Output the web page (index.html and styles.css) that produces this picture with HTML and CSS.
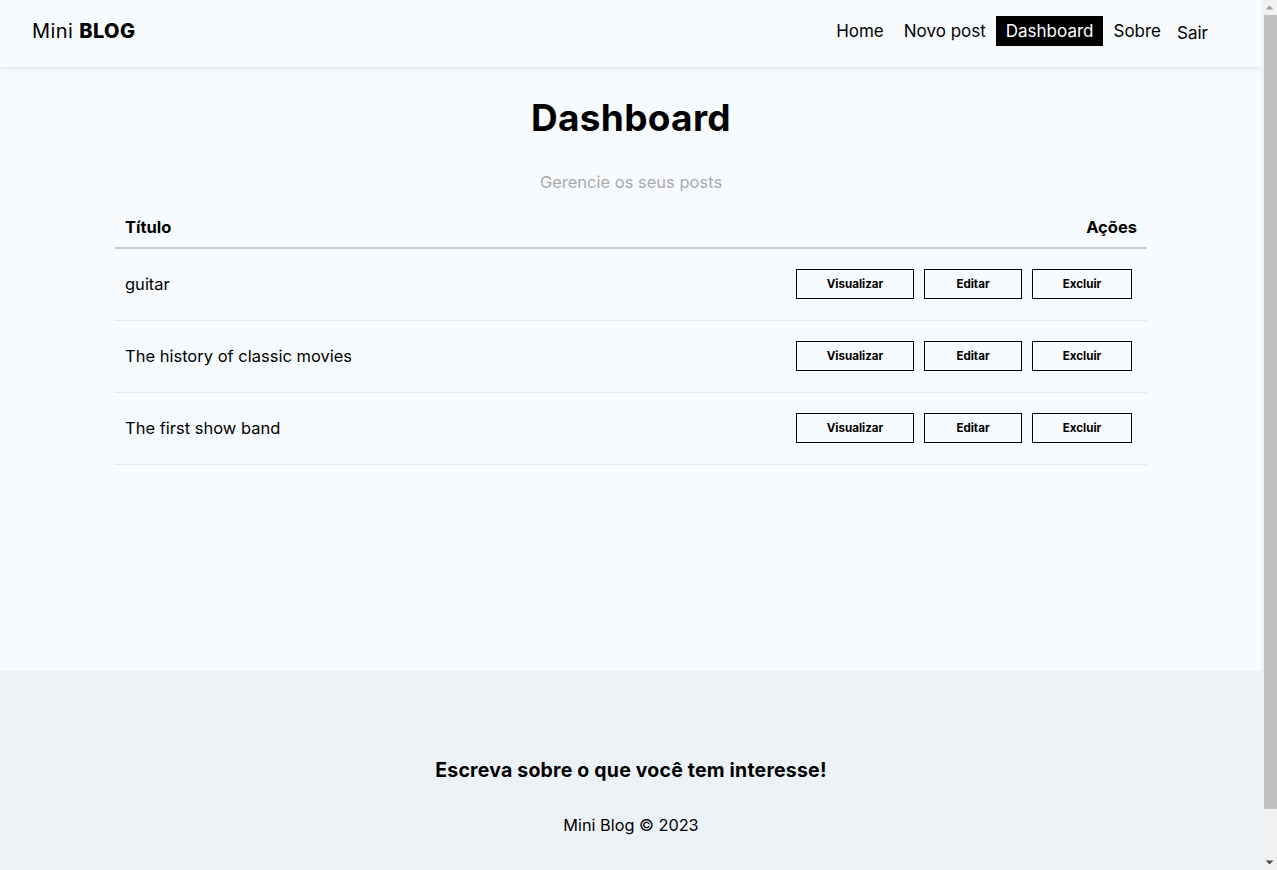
FILE: index.html
```html
<!DOCTYPE html>
<html lang="pt-BR">
<head>
<meta charset="utf-8">
<title>Mini Blog</title>
<link rel="stylesheet" href="styles.css">
</head>
<body>
<nav class="navbar">
  <a class="brand" href="#">Mini <span>BLOG</span></a>
  <ul class="links">
    <li><a href="#">Home</a></li>
    <li><a href="#">Novo post</a></li>
    <li><a href="#" class="active">Dashboard</a></li>
    <li><a href="#">Sobre</a></li>
    <li><button class="logout">Sair</button></li>
  </ul>
</nav>
<main class="container">
  <div class="dashboard">
    <h2 class="title">Dashboard</h2>
    <p class="subtitle">Gerencie os seus posts</p>
    <div class="post-header">
      <span>Título</span>
      <span>Ações</span>
    </div>
    <div class="post-row">
      <p>guitar</p>
      <div class="actions">
        <a class="btn btn-view" href="#">Visualizar</a>
        <a class="btn btn-edit" href="#">Editar</a>
        <button class="btn btn-del">Excluir</button>
      </div>
    </div>
    <div class="post-row">
      <p>The history of classic movies</p>
      <div class="actions">
        <a class="btn btn-view" href="#">Visualizar</a>
        <a class="btn btn-edit" href="#">Editar</a>
        <button class="btn btn-del">Excluir</button>
      </div>
    </div>
    <div class="post-row">
      <p>The first show band</p>
      <div class="actions">
        <a class="btn btn-view" href="#">Visualizar</a>
        <a class="btn btn-edit" href="#">Editar</a>
        <button class="btn btn-del">Excluir</button>
      </div>
    </div>
  </div>
</main>
<footer class="footer">
  <h3>Escreva sobre o que você tem interesse!</h3>
  <p>Mini Blog &copy; 2023</p>
</footer>
<div class="scrollbar" aria-hidden="true">
  <div class="sb-arrow"><svg width="15" height="15" viewBox="0 0 15 15"><path d="M3.5 9.5 L7.5 5.5 L11.5 9.5 Z" fill="#a3a3a3"/></svg></div>
  <div class="sb-thumb"></div>
  <div class="sb-track"></div>
  <div class="sb-arrow"><svg width="15" height="15" viewBox="0 0 15 15"><path d="M3.5 5.5 L11.5 5.5 L7.5 9.5 Z" fill="#505050"/></svg></div>
</div>
</body>
</html>
```

FILE: styles.css
```css
* { box-sizing: border-box; }
html, body { margin: 0; padding: 0; }
html { padding-right: 15px; background: #f1f1f1; }
body {
  font-family: "Inter", "Open Sans", sans-serif;
  background: #f7fbfe;
  color: #000;
}
a { color: inherit; text-decoration: none; }

.navbar {
  height: 67px;
  display: flex;
  align-items: center;
  justify-content: space-between;
  padding: 0 48px 6px 32px;
  box-shadow: 0 2px 5px rgba(0,0,0,0.08);
  position: relative;
}
.brand { font-size: 20px; letter-spacing: 0.4px; color: #000; }
.brand span { font-weight: 800; }
.links {
  list-style: none;
  display: flex;
  align-items: center;
  margin: 0;
  padding: 0;
}
.links a {
  display: block;
  font-size: 17px;
  padding: 5px 10px;
  color: #000;
  line-height: 20px;
}
.links a.active { background: #000; color: #fff; }
.logout {
  font-family: inherit;
  background: none;
  border: none;
  font-size: 17px;
  padding: 7px 6px 3px;
  color: #000;
  line-height: 20px;
}

.container { min-height: 604px; }
.dashboard {
  width: 1032px;
  margin: 0 auto;
  display: flex;
  flex-direction: column;
}
.title {
  margin: 31px 0 0;
  text-align: center;
  font-size: 37px;
  font-weight: 700;
  line-height: 40px;
  letter-spacing: 0.3px;
}
.subtitle {
  margin: 34px 0 0;
  text-align: center;
  color: #aaa;
  font-size: 16.5px;
  line-height: 20px;
}
.post-header {
  display: flex;
  justify-content: space-between;
  padding: 9px 10px 10px;
  margin-top: 16px;
  font-weight: 700;
  font-size: 16.5px;
  line-height: 20px;
  border-bottom: 2px solid #ccc;
}
.post-row {
  display: flex;
  justify-content: space-between;
  align-items: center;
  height: 72px;
  padding: 0 15px 2px 10px;
  border-bottom: 1px solid #e6e9ec;
}
.post-row p { margin: 0; font-size: 16.5px; }
.actions { display: flex; gap: 10px; }
.btn {
  display: flex;
  align-items: center;
  justify-content: center;
  height: 30px;
  border: 1px solid #000;
  background: transparent;
  font-family: inherit;
  font-size: 11.6px;
  font-weight: 700;
  color: #000;
  padding: 0;
}
.btn-view { width: 118px; }
.btn-edit { width: 98px; }
.btn-del { width: 100px; }

.footer {
  height: 250px;
  background: #edf2f6;
  display: flex;
  flex-direction: column;
  align-items: center;
  justify-content: center;
  padding-top: 2px;
}
.footer h3 { margin: 0 0 34px; font-size: 19.5px; font-weight: 700; line-height: 22px; letter-spacing: 0.2px; }
.footer p { margin: 0; font-size: 16.3px; line-height: 20px; }

.scrollbar {
  position: fixed;
  top: 0;
  right: 0;
  width: 15px;
  height: 100vh;
  background: #f1f1f1;
  display: flex;
  flex-direction: column;
}
.sb-arrow { height: 15px; flex: none; display: flex; }
.sb-thumb {
  height: 794px;
  flex: none;
  margin: 0 0 0 2px;
  background: #c1c1c1;
}
.sb-track { flex: 1; }
```
